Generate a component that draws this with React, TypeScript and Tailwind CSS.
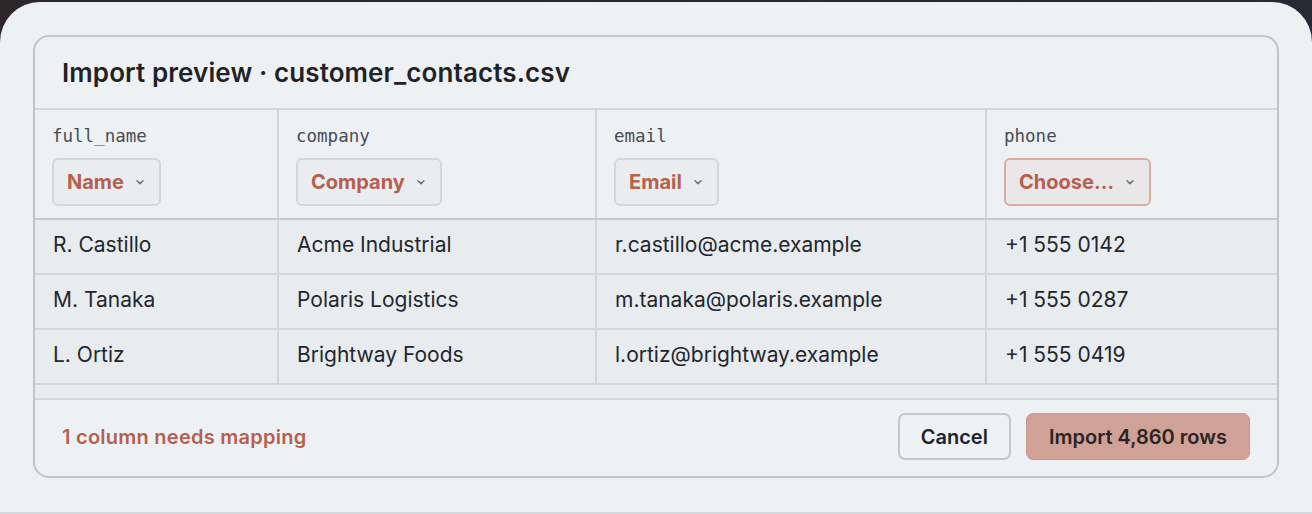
import React from 'react';

type Column = { key: string; label: string; mapped: boolean };

const columns: Column[] = [
    { key: 'full_name', label: 'Name', mapped: true },
    { key: 'company', label: 'Company', mapped: true },
    { key: 'email', label: 'Email', mapped: true },
    { key: 'phone', label: 'Choose…', mapped: false },
];

const rows = [
    ['R. Castillo', 'Acme Industrial', 'r.castillo@acme.example', '+1 555 0142'],
    ['M. Tanaka', 'Polaris Logistics', 'm.tanaka@polaris.example', '+1 555 0287'],
    ['L. Ortiz', 'Brightway Foods', 'l.ortiz@brightway.example', '+1 555 0419'],
];

const gridCols = 'grid grid-cols-[242px_318px_390px_1fr]';

const Chevron: React.FC = () => (
    <svg width="10" height="10" viewBox="0 0 10 10" fill="none" className="text-[#6b7280]">
        <path d="M2 3.8 L5 6.6 L8 3.8" stroke="currentColor" strokeWidth="1.5" strokeLinecap="round" strokeLinejoin="round" />
    </svg>
);

const MapSelect: React.FC<{ col: Column }> = ({ col }) => (
    <button
        className={`h-[48px] inline-flex items-center gap-[11px] pl-[13px] pr-[14px] rounded-[6px] border-2 text-[20px] font-bold text-[#b5604f] ${
            col.mapped ? 'border-[#d3d7db] bg-[#e9edf0]' : 'border-[#dcaa9f] bg-[#e9e7e7]'
        }`}
    >
        {col.label}
        <Chevron />
    </button>
);

const App: React.FC = () => {
    return (
        <div className="h-[514px] overflow-hidden bg-gradient-to-r from-[#2e2629] to-[#252a33] pt-[2px] font-['Inter','Noto_Sans',sans-serif] text-[#1f2328]">
            <div className="h-[512px] rounded-t-[40px] bg-[#eef1f4] border-b-2 border-[#d5d8db] px-[33px] pt-[33px]">
                <div className="rounded-[16px] border-2 border-[#c1c5c9] bg-[#eef1f4] overflow-hidden">
                    <div className="h-[73px] flex items-center px-[27px] border-b-2 border-[#d3d7db]">
                        <h1 className="text-[26px] font-semibold tracking-[0.1px]">Import preview · customer_contacts.csv</h1>
                    </div>

                    <div className={`${gridCols} border-b-2 border-[#c6cacd]`}>
                        {columns.map((col, i) => (
                            <div key={col.key} className={`pt-[16px] pb-[12px] pl-[17px] ${i > 0 ? 'border-l-2 border-[#d3d7db]' : ''}`}>
                                <div className="h-5 leading-5 text-[17.5px] text-[#464c55] font-['DejaVu_Sans_Mono',monospace]">{col.key}</div>
                                <div className="mt-[12px]">
                                    <MapSelect col={col} />
                                </div>
                            </div>
                        ))}
                    </div>

                    <div className="bg-[#e8ecef]">
                        {rows.map((row, r) => (
                            <div key={r} className={`${gridCols} border-b-2 border-[#d3d7db]`}>
                                {row.map((cell, i) => (
                                    <div key={i} className={`h-[53px] flex items-center pl-[18px] pb-[3px] text-[21px] text-[#23272d] ${i > 0 ? 'border-l-2 border-[#d3d7db]' : ''}`}>
                                        {cell}
                                    </div>
                                ))}
                            </div>
                        ))}
                        <div className="h-[15px] border-b-2 border-[#d3d7db]" />
                    </div>

                    <div className="h-[76px] pb-[3px] flex items-center justify-between pl-[27px] pr-[27px]">
                        <span className="text-[20px] font-semibold tracking-[0.25px] text-[#b5604f]">1 column needs mapping</span>
                        <div className="flex items-center gap-[15px]">
                            <button className="h-[47px] px-[21px] rounded-[7px] border-2 border-[#c3c7cb] bg-[#eef1f4] text-[20px] font-semibold">
                                Cancel
                            </button>
                            <button className="h-[47px] px-[22px] rounded-[7px] border border-[#c9998f] bg-[#cfa197] text-[20px] font-semibold text-[#2a2422]">
                                Import 4,860 rows
                            </button>
                        </div>
                    </div>
                </div>
            </div>
        </div>
    );
};

export default App;
